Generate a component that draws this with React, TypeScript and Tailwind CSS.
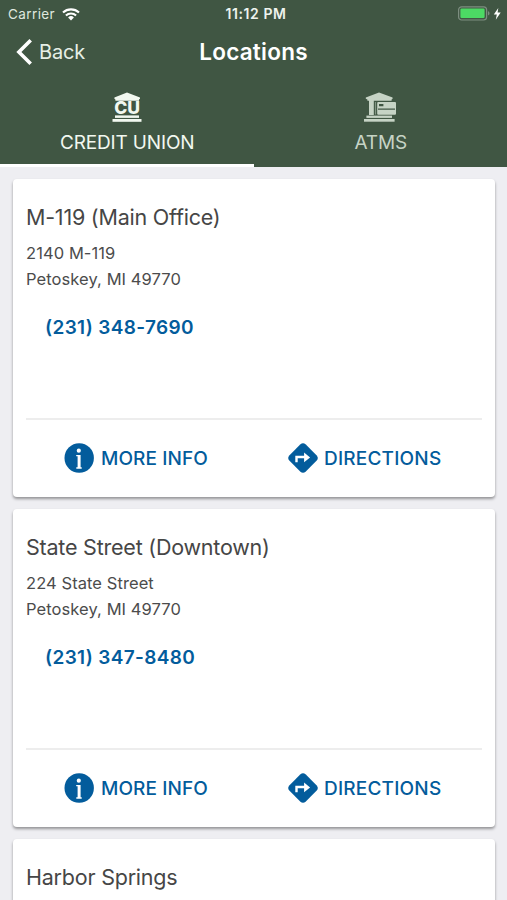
type Location = {
  id: number;
  name: string;
  street?: string;
  city?: string;
  phone?: string;
};

const locations: Location[] = [
  {
    id: 1,
    name: "M-119 (Main Office)",
    street: "2140 M-119",
    city: "Petoskey, MI 49770",
    phone: "(231) 348-7690",
  },
  {
    id: 2,
    name: "State Street (Downtown)",
    street: "224 State Street",
    city: "Petoskey, MI 49770",
    phone: "(231) 347-8480",
  },
  {
    id: 3,
    name: "Harbor Springs",
  },
];

function WifiIcon() {
  return (
    <svg width="18" height="13" viewBox="0 0 18 13" fill="none" stroke="currentColor">
      <path d="M1 4.6a11.6 11.6 0 0 1 16 0" strokeWidth="2.1" />
      <path d="M3.9 7.6a7.4 7.4 0 0 1 10.2 0" strokeWidth="2.1" />
      <path d="M9 12.4 6.1 9.5a4.2 4.2 0 0 1 5.8 0Z" fill="currentColor" stroke="none" />
    </svg>
  );
}

function BatteryIcon() {
  return (
    <svg width="44" height="16" viewBox="0 0 44 16">
      <rect x="0.6" y="0.8" width="28" height="13.2" rx="3" fill="none" stroke="#7d8e80" strokeWidth="1.2" />
      <rect x="2.4" y="2.6" width="24.2" height="9.4" rx="1.2" fill="#4cd964" />
      <path d="M30 5.3c2 .6 2 3.6 0 4.2Z" fill="#7d8e80" />
      <path d="M40.3 1.9 35.8 8.4h3l-1 5.4 4.9-7.2h-3.1Z" fill="#fff" />
    </svg>
  );
}

function CreditUnionIcon() {
  return (
    <svg width="30" height="30" viewBox="0 0 30 30" fill="currentColor">
      <path d="M15 .4 28 5.6v1.2l-1 .7v1.3H3.4V7.5l-1-.7V5.6Z" />
      <text
        x="15.1"
        y="22.2"
        textAnchor="middle"
        fontSize="17.5"
        fontWeight="800"
        textLength="25.5"
        lengthAdjust="spacingAndGlyphs"
      >
        CU
      </text>
      <rect x="3" y="23.4" width="24" height="2.5" />
      <rect x="0.5" y="27" width="29" height="2.8" />
    </svg>
  );
}

function AtmIcon() {
  return (
    <svg width="33" height="30" viewBox="0 0 33 30" fill="currentColor">
      <path d="M15 .4 28.6 5.6v1.2l-1 .7v1.3H3.4V7.5l-1.6-.7V5.6Z" />
      <rect x="5" y="8" width="4.8" height="15" />
      <rect x="10.9" y="10" width="1.2" height="12.5" opacity="0.5" />
      <path
        fillRule="evenodd"
        d="M14.2 10h16.8q1 0 1 1v10.8q0 1-1 1H14.2q-1 0-1-1V11q0-1 1-1ZM15 11.9v2.4h4.4v-2.4ZM14 16.5v1.3H31v-1.3Z"
      />
      <rect x="2.4" y="23.6" width="25.6" height="2.3" />
      <rect x="0" y="27" width="30.6" height="2.7" />
    </svg>
  );
}

function InfoIcon() {
  return (
    <svg width="30" height="30" viewBox="0 0 30 30">
      <circle cx="15.2" cy="15" r="14.7" fill="#035c9c" />
      <circle cx="14.8" cy="7.7" r="2.1" fill="#fff" />
      <path d="M12.2 11.9h4.4v12.4h1.1v1.4h-5.4v-1.4h1.3V13.3h-1.4Z" fill="#fff" />
    </svg>
  );
}

function DirectionsIcon() {
  return (
    <svg width="30" height="30" viewBox="0 0 30 30">
      <path
        d="M12.2 1.5q2.8-2.6 5.6 0L28.5 12.2q2.6 2.8 0 5.6L17.8 28.5q-2.8 2.6-5.6 0L1.5 17.8q-2.6-2.8 0-5.6Z"
        fill="#035c9c"
      />
      <path d="M7.3 19.3v-6.6h8.8V9.4l6 5-6 4.9v-4.1H9.7v4.1Z" fill="#fff" />
    </svg>
  );
}

function StatusBar() {
  return (
    <div className="grid h-7 grid-cols-3 items-center pl-2 pr-[5px] text-[13.5px] leading-7">
      <div className="flex items-center gap-[7px] text-[#dfe8df]">
        <span className="tracking-[0.4px]">Carrier</span>
        <span className="text-white">
          <WifiIcon />
        </span>
      </div>
      <div className="pl-0.5 text-center text-[14px] font-semibold tracking-[0.6px] text-[#eef3ee]">11:12 PM</div>
      <div className="flex justify-end">
        <BatteryIcon />
      </div>
    </div>
  );
}

function NavBar() {
  return (
    <div className="grid h-[62px] grid-cols-3 items-start pl-4 pr-4 pt-[9px] leading-[30px]">
      <button className="flex items-center gap-[7px] text-left text-[20px] tracking-[-0.2px] text-[#e6efe6]">
        <svg width="16" height="26" viewBox="0 0 16 26" fill="none" stroke="#fff" strokeWidth="3.6">
          <path d="M14.7 1.3 2.9 13l11.8 11.7" />
        </svg>
        Back
      </button>
      <h1 className="text-center text-[22.5px] font-semibold tracking-[0.25px] text-white">Locations</h1>
    </div>
  );
}

function Tabs() {
  return (
    <div className="grid h-[77px] grid-cols-2 text-[19px] leading-6 tracking-[-0.15px]">
      <button className="flex flex-col items-center border-b-[3px] border-white pl-px pt-0.5 text-[#f2f8f0]">
        <CreditUnionIcon />
        <span className="mt-[9px]">CREDIT UNION</span>
      </button>
      <button className="flex flex-col items-center pl-px pt-0.5 text-[#c6d3c5]">
        <AtmIcon />
        <span className="mt-[9px]">ATMS</span>
      </button>
    </div>
  );
}

function LocationCard({ location }: { location: Location }) {
  return (
    <article className="flex h-[318px] shrink-0 flex-col rounded-[4px] bg-white px-[13px] pt-6 shadow-[0_2px_3px_rgba(0,0,0,0.38)]">
      <h2 className="text-[21.5px] leading-7 tracking-[-0.22px] text-[#464646]">{location.name}</h2>
      {location.phone && (
        <>
          <div className="mt-[9px] text-[16.5px] leading-[26px] tracking-[0.08px] text-[#4c4c4c]">
            <p>{location.street}</p>
            <p>{location.city}</p>
          </div>
          <a className="ml-[19px] mt-[23px] text-[19px] font-semibold leading-[26px] tracking-[0.35px] text-[#035c9c]">
            {location.phone}
          </a>
          <div className="mt-auto flex h-[79px] border-t-2 border-[#ededed] text-[19px] font-medium text-[#035c9c]">
            <button className="flex h-[76px] w-[223px] items-center gap-[7px] pl-[38px]">
              <InfoIcon />
              <span className="pt-0.5 tracking-[0.1px]">MORE INFO</span>
            </button>
            <button className="flex h-[76px] items-center gap-[6px] pl-[39px]">
              <DirectionsIcon />
              <span className="pt-0.5 tracking-[0.2px]">DIRECTIONS</span>
            </button>
          </div>
        </>
      )}
    </article>
  );
}

export default function App() {
  return (
    <div className="flex h-[900px] w-[507px] flex-col overflow-hidden bg-[#eeeef2] font-[Inter,'Liberation_Sans',sans-serif]">
      <header className="h-[167px] shrink-0 bg-[#405643]">
        <StatusBar />
        <NavBar />
        <Tabs />
      </header>
      <main className="flex flex-col gap-3 overflow-hidden pl-[13px] pr-3 pt-3">
        {locations.map((location) => (
          <LocationCard key={location.id} location={location} />
        ))}
      </main>
    </div>
  );
}
